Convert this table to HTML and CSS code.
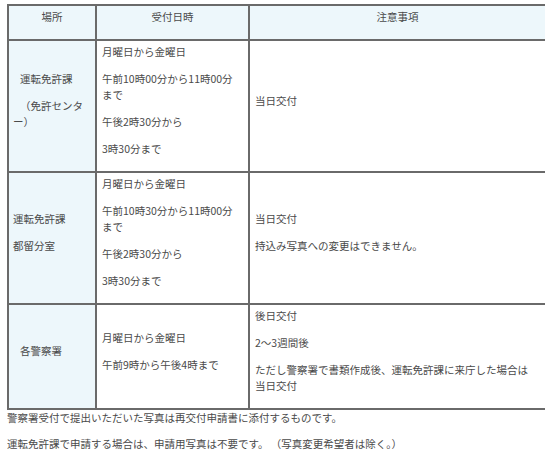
FILE: index.html
```html
<!DOCTYPE html>
<html lang="ja">
<head>
<meta charset="utf-8">
<link rel="stylesheet" href="styles.css">
</head>
<body>
<table class="info">
  <colgroup>
    <col class="c-place">
    <col class="c-time">
    <col class="c-note">
  </colgroup>
  <thead>
    <tr>
      <th><p>場所</p></th>
      <th><p>受付日時</p></th>
      <th><p>注意事項</p></th>
    </tr>
  </thead>
  <tbody>
    <tr>
      <td class="place indent"><p>運転免許課</p><p>（免許センター）</p></td>
      <td class="time"><p>月曜日から金曜日</p><p>午前10時00分から11時00分まで</p><p>午後2時30分から</p><p>3時30分まで</p></td>
      <td class="note"><p>当日交付</p></td>
    </tr>
    <tr>
      <td class="place"><p>運転免許課</p><p>都留分室</p></td>
      <td class="time"><p>月曜日から金曜日</p><p>午前10時30分から11時00分まで</p><p>午後2時30分から</p><p>3時30分まで</p></td>
      <td class="note"><p>当日交付</p><p>持込み写真への変更はできません。</p></td>
    </tr>
    <tr>
      <td class="place indent"><p>各警察署</p></td>
      <td class="time"><p>月曜日から金曜日</p><p>午前9時から午後4時まで</p></td>
      <td class="note"><p>後日交付</p><p>2〜3週間後</p><p>ただし警察署で書類作成後、運転免許課に来庁した場合は当日交付</p></td>
    </tr>
  </tbody>
</table>
<p class="foot">警察署受付で提出いただいた写真は再交付申請書に添付するものです。</p>
<p class="foot">運転免許課で申請する場合は、申請用写真は不要です。 （写真変更希望者は除く。）</p>
</body>
</html>
```

FILE: styles.css
```css
html, body {
  background: #ffffff;
}
body {
  margin: 4px 5px 0 7px;
  font-family: "Noto Sans CJK JP", "Noto Sans", sans-serif;
  font-size: 10.5px;
  line-height: 16px;
  color: #4a4a4a;
}
p {
  margin: 0 0 11px 0;
}
.info {
  width: 538px;
  table-layout: fixed;
  border-collapse: collapse;
  border: 2px solid #6a6a6a;
}
.c-place { width: 88px; }
.c-time { width: 153px; }
.c-note { width: 297px; }
.info th,
.info td {
  border: 2px solid #6a6a6a;
  padding: 3px 8px 3px 5px;
  vertical-align: middle;
  text-align: left;
}
.info th {
  background: #edf7fb;
  font-weight: normal;
  text-align: center;
  padding: 3px 5px 3px 5px;
}
.info td.place {
  background: #edf7fb;
  padding-left: 4px;
}
.info td.indent p {
  text-indent: 7px;
}
.foot {
  margin: 0 0 10px 0;
}
```
